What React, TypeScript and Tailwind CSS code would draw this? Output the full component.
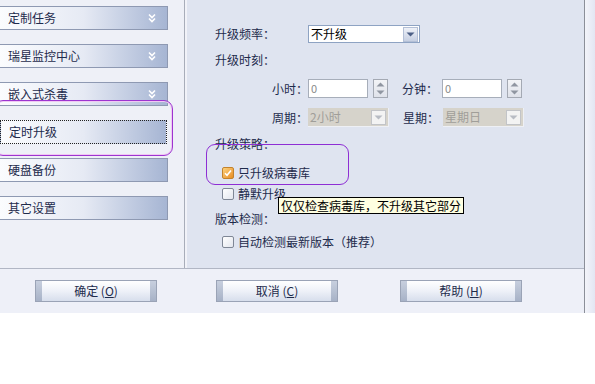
import React from "react";

const Chevron = () => (
  <svg width="10" height="10" viewBox="0 0 10 10" className="shrink-0">
    <path d="M2 1.5 L5 4.5 L8 1.5 M2 5.5 L5 8.5 L8 5.5" stroke="#ffffff" strokeWidth="1.6" fill="none" />
  </svg>
);

const NavItem = ({ label, chevron, selected }: { label: string; chevron?: boolean; selected?: boolean }) => (
  <div
    className={
      "h-[24px] flex items-center justify-between pl-[8px] pr-[10px] bg-gradient-to-r from-[#fbfcfe] via-[#e6eaf4] to-[#a6b5d3] text-[#1e2b4c] " +
      (selected ? "w-[167px] border border-dotted border-[#222]" : "w-[168px] border-y border-r border-[#8e99b2]")
    }
  >
    <span className="leading-none">{label}</span>
    {chevron && <Chevron />}
  </div>
);

const DropArrow = ({ disabled }: { disabled?: boolean }) => (
  <div
    className={
      "w-[15px] h-[15px] flex items-center justify-center border " +
      (disabled ? "bg-[#f3f3f3] border-[#c2c4c8]" : "bg-gradient-to-b from-[#eef1f8] to-[#c6cfe2] border-[#b3bfd6]")
    }
  >
    <svg width="9" height="5" viewBox="0 0 9 5">
      <path d="M0.5 0.5 L8.5 0.5 L4.5 4.5 Z" fill={disabled ? "#b8bcc4" : "#4c5f86"} />
    </svg>
  </div>
);

const Spinner = () => (
  <div className="w-[15px] h-[19px] border border-[#a4a9b3] bg-gradient-to-b from-[#f3f4f7] to-[#dfe2ea] flex flex-col items-center justify-center gap-[3px] ml-[5px]">
    <svg width="9" height="5" viewBox="0 0 9 5">
      <path d="M0.5 4.5 L8.5 4.5 L4.5 0.5 Z" fill="#9096a1" />
    </svg>
    <svg width="9" height="5" viewBox="0 0 9 5">
      <path d="M0.5 0.5 L8.5 0.5 L4.5 4.5 Z" fill="#9096a1" />
    </svg>
  </div>
);

const NumInput = () => (
  <div className="flex items-center">
    <div className="w-[60px] h-[19px] bg-white border border-[#a7aeba] flex items-center pl-[2px] text-[#8a8a8a] text-[11px] leading-none">
      0
    </div>
    <Spinner />
  </div>
);

const DisabledSelect = ({ value }: { value: string }) => (
  <div className="w-[81px] h-[19px] bg-[#d6d3cb] flex items-center justify-between pl-[2px] pr-[2px] border-r border-b border-[#eef0f5] text-[#a09e99] leading-none">
    <span>{value}</span>
    <DropArrow disabled />
  </div>
);

const CheckBox = ({ checked }: { checked?: boolean }) =>
  checked ? (
    <div className="w-[12px] h-[12px] rounded-[2px] border border-[#c3822c] bg-gradient-to-br from-[#fbd27c] to-[#e88d1a] flex items-center justify-center">
      <svg width="8" height="8" viewBox="0 0 8 8">
        <path d="M1 4.2 L3 6.2 L7 1.5" stroke="#ffffff" strokeWidth="1.6" fill="none" />
      </svg>
    </div>
  ) : (
    <div className="w-[12px] h-[12px] rounded-[2px] border border-[#7f8796] bg-gradient-to-br from-[#ffffff] to-[#e3e6ee]" />
  );

const Btn = ({ label, hot, className }: { label: string; hot: string; className?: string }) => (
  <div
    className={
      "w-[122px] h-[22px] border border-[#9aa3b6] flex items-stretch bg-gradient-to-b from-[#ffffff] via-[#eef1f8] to-[#d7deec] " +
      (className ?? "")
    }
  >
    <div className="w-[6px] bg-gradient-to-b from-[#c7cfde] to-[#a7b2c7]" />
    <div className="flex-1 flex items-center justify-center text-[#1e2b4c] leading-none">
      {label} (<span className="underline">{hot}</span>)
    </div>
    <div className="w-[6px] bg-gradient-to-b from-[#c7cfde] to-[#a7b2c7]" />
  </div>
);

export default function App() {
  return (
    <div className="w-[595px] h-[384px] bg-white relative overflow-hidden font-['Noto_Sans_CJK_SC','Noto_Sans',sans-serif] text-[12px]">
      <div className="flex h-[313px]">
        <div className="w-[584px] flex flex-col">
          <div className="h-[269px] flex border-b border-[#b1b6c4]">
            {/* left nav */}
            <div className="w-[184px] bg-[#eef0f7] relative pt-[6px] flex flex-col gap-[14px]">
              <NavItem label="定制任务" chevron />
              <NavItem label="瑞星监控中心" chevron />
              <NavItem label="嵌入式杀毒" chevron />
              <NavItem label="定时升级" selected />
              <NavItem label="硬盘备份" />
              <NavItem label="其它设置" />
              <div className="absolute left-[-6px] top-[100px] w-[179px] h-[56px] border border-[#9d35d0] rounded-[9px] shadow-[inset_0_0_0_1px_#f0c8f4]" />
            </div>
            <div className="w-[1px] bg-[#a8adb9]" />
            <div className="w-[2px] bg-[#f1f2f8]" />
            {/* right panel */}
            <div className="flex-1 bg-[#dfe4f0] relative pl-[28px] pt-[25px] flex flex-col text-[#1e2b4c]">
              <div className="h-[18px] flex items-center">
                <span className="w-[93px] leading-none">升级频率：</span>
                <div className="w-[112px] h-[18px] bg-white border border-[#8ea3c3] flex items-center justify-between pl-[2px] pr-[1px] text-black leading-none">
                  <span>不升级</span>
                  <DropArrow />
                </div>
              </div>
              <div className="h-[18px] mt-[8px] flex items-center leading-none">升级时刻：</div>
              <div className="h-[19px] mt-[10px] flex items-center">
                <span className="w-[93px] text-right leading-none">小时：</span>
                <NumInput />
                <span className="w-[54px] text-right pr-[4px] leading-none">分钟：</span>
                <NumInput />
              </div>
              <div className="h-[19px] mt-[10px] flex items-center">
                <span className="w-[93px] text-right leading-none">周期：</span>
                <DisabledSelect value="2小时" />
                <span className="w-[54px] text-right pr-[4px] leading-none">星期：</span>
                <DisabledSelect value="星期日" />
              </div>
              <div className="h-[18px] mt-[8px] flex items-center leading-none">升级策略：</div>
              <div className="h-[18px] mt-[11px] flex items-center gap-[4px] pl-[7px] leading-none">
                <CheckBox checked />
                <span>只升级病毒库</span>
              </div>
              <div className="h-[18px] mt-[3px] flex items-center gap-[4px] pl-[7px] leading-none">
                <CheckBox />
                <span>静默升级</span>
              </div>
              <div className="h-[18px] mt-[7px] flex items-center leading-none">版本检测：</div>
              <div className="h-[18px] mt-[5px] flex items-center gap-[4px] pl-[7px] leading-none">
                <CheckBox />
                <span>自动检测最新版本（推荐）</span>
              </div>
              {/* purple highlight */}
              <div className="absolute left-[19px] top-[144px] w-[143px] h-[41px] border border-[#8e2fd4] rounded-[9px]" />
              {/* tooltip */}
              <div className="absolute left-[91px] top-[197px] h-[17px] px-[2px] bg-[#ffffe1] border border-black text-black flex items-center leading-none whitespace-nowrap">
                仅仅检查病毒库，不升级其它部分
              </div>
            </div>
          </div>
          <div className="flex-1 bg-[#eef0f8] pt-[11px] flex items-start">
            <Btn label="确定" hot="O" className="ml-[35px]" />
            <Btn label="取消" hot="C" className="ml-[59px]" />
            <Btn label="帮助" hot="H" className="ml-[62px]" />
          </div>
        </div>
        <div className="w-[1px] bg-[#8b8f99]" />
        <div className="w-[10px] bg-gradient-to-r from-[#f3f4fa] to-[#e3e6f2]" />
      </div>
    </div>
  );
}
